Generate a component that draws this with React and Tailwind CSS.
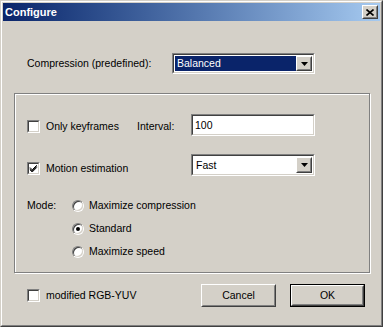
import React from "react";

const sunkenOuter = "border border-t-[#808080] border-l-[#808080] border-r-white border-b-white";
const sunkenInner = "border border-t-[#404040] border-l-[#404040] border-r-[#d4d0c8] border-b-[#d4d0c8]";
const raisedOuter = "border border-t-white border-l-white border-r-[#404040] border-b-[#404040]";
const raisedInner = "border border-t-[#d4d0c8] border-l-[#d4d0c8] border-r-[#808080] border-b-[#808080]";

function Checkbox({ checked }) {
  return (
    <div className={`w-[13px] h-[13px] shrink-0 ${sunkenOuter}`}>
      <div className={`w-full h-full bg-white ${sunkenInner} flex items-center justify-center`}>
        {checked && (
          <svg width="9" height="9" viewBox="0 0 9 9">
            <path d="M1 3.5 L3.2 5.8 L7.8 1.2 M1 4.7 L3.2 7 L7.8 2.4 M1 5.8 L3.2 8 L7.8 3.4" stroke="#000" strokeWidth="1" fill="none" />
          </svg>
        )}
      </div>
    </div>
  );
}

function Radio({ checked }) {
  return (
    <div className="w-[12px] h-[12px] shrink-0 rounded-full border border-t-[#808080] border-l-[#808080] border-r-white border-b-white">
      <div className="w-full h-full rounded-full bg-white shadow-[inset_1px_1px_0_#404040,inset_-1px_-1px_0_#d4d0c8] flex items-center justify-center">
        {checked && <div className="w-[4px] h-[4px] rounded-full bg-black" />}
      </div>
    </div>
  );
}

function Arrow() {
  return (
    <div className={`w-[16px] h-full shrink-0 bg-[#d4d0c8] ${raisedOuter}`}>
      <div className={`w-full h-full ${raisedInner} flex items-center justify-center`}>
        <svg width="7" height="4" viewBox="0 0 7 4">
          <polygon points="0,0 7,0 3.5,4" fill="#000" />
        </svg>
      </div>
    </div>
  );
}

function Combo({ value, selected, className }) {
  return (
    <div className={`${sunkenOuter} ${className}`}>
      <div className={`w-full h-full bg-white ${sunkenInner} flex p-px`}>
        <div className={`flex-1 flex items-center pl-[2px] ${selected ? "bg-[#0a246a] text-white" : "text-black"}`}>
          {value}
        </div>
        <Arrow />
      </div>
    </div>
  );
}

function Button({ children, isDefault }) {
  const inner = (
    <div className={`w-full h-full ${raisedOuter}`}>
      <div className={`w-full h-full ${raisedInner} flex items-center justify-center`}>{children}</div>
    </div>
  );
  if (isDefault) {
    return <div className="w-[75px] h-[23px] border border-black">{inner}</div>;
  }
  return <div className="w-[75px] h-[23px]">{inner}</div>;
}

export default function App() {
  return (
    <div className="w-[383px] h-[327px] bg-[#d4d0c8] font-['Liberation_Sans',Arial,sans-serif] text-[10.5px] leading-[13px] text-black border border-t-[#d4d0c8] border-l-[#d4d0c8] border-r-[#404040] border-b-[#404040]">
      <div className="w-full h-full border border-t-white border-l-white border-r-[#808080] border-b-[#808080] p-px flex flex-col">
        <div className="h-[18px] shrink-0 bg-gradient-to-r from-[#0a246a] to-[#a6caf0] flex items-center justify-between pl-[2px] pr-[2px]">
          <span className="text-white font-bold text-[11px]">Configure</span>
          <div className={`w-[16px] h-[14px] bg-[#d4d0c8] ${raisedOuter}`}>
            <div className={`w-full h-full ${raisedInner} flex items-center justify-center`}>
              <svg width="8" height="7" viewBox="0 0 8 7">
                <path d="M0.5 0.5 L7.5 6.5 M7.5 0.5 L0.5 6.5" stroke="#000" strokeWidth="1.6" />
              </svg>
            </div>
          </div>
        </div>

        <div className="flex-1 flex flex-col">
          <div className="mt-[32px] h-[21px] flex items-center pl-[24px]">
            <div className="w-[145px]">Compression (predefined):</div>
            <Combo value="Balanced" selected className="w-[143px] h-[21px]" />
          </div>

          <div className="mt-[19px] ml-[11px] w-[356px] h-[180px] border border-[#808080] shadow-[inset_1px_1px_0_#fff,1px_1px_0_#fff] flex flex-col">
            <div className="mt-[20px] h-[22px] flex items-center pl-[12px]">
              <div className="w-[110px] flex items-center mt-[3px]">
                <Checkbox />
                <span className="ml-[6px]">Only keyframes</span>
              </div>
              <div className="w-[54px] mt-[3px]">Interval:</div>
              <div className={`w-[124px] h-[22px] ${sunkenOuter}`}>
                <div className={`w-full h-full bg-white ${sunkenInner} flex items-center pl-[2px]`}>100</div>
              </div>
            </div>

            <div className="mt-[18px] flex items-start pl-[12px]">
              <div className="w-[164px] flex items-center mt-[8px]">
                <Checkbox checked />
                <span className="ml-[6px]">Motion estimation</span>
              </div>
              <Combo value="Fast" className="w-[124px] h-[22px]" />
            </div>

            <div className="mt-[18px] h-[23px] flex items-center pl-[12px]">
              <div className="w-[45px]">Mode:</div>
              <Radio />
              <span className="ml-[5px]">Maximize compression</span>
            </div>
            <div className="h-[23px] flex items-center pl-[57px]">
              <Radio checked />
              <span className="ml-[5px]">Standard</span>
            </div>
            <div className="h-[23px] flex items-center pl-[57px]">
              <Radio />
              <span className="ml-[5px]">Maximize speed</span>
            </div>
          </div>

          <div className="mt-[11px] h-[23px] flex items-center pl-[24px]">
            <div className="w-[174px] flex items-center">
              <Checkbox />
              <span className="ml-[6px]">modified RGB-YUV</span>
            </div>
            <Button>Cancel</Button>
            <div className="w-[14px]" />
            <Button isDefault>OK</Button>
          </div>
        </div>
      </div>
    </div>
  );
}
